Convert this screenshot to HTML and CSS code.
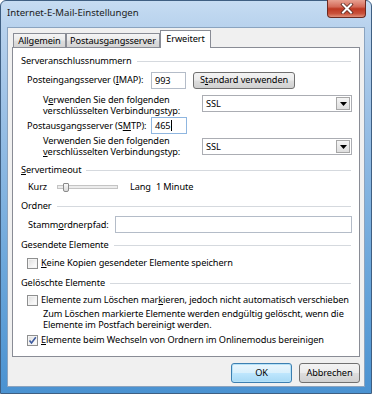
FILE: index.html
```html
<!DOCTYPE html>
<html>
<head>
<meta charset="utf-8">
<link rel="stylesheet" href="styles.css">
</head>
<body>
<div class="window">
  <div class="titlebar">
    <span class="title">Internet-E-Mail-Einstellungen</span>
    <div class="close">
      <svg width="14" height="11" viewBox="0 0 14 11">
        <path d="M3 1.5 L11 9.5 M11 1.5 L3 9.5" stroke="#5a2a22" stroke-width="3.6" stroke-linecap="square" fill="none"/>
        <path d="M3 1.5 L11 9.5 M11 1.5 L3 9.5" stroke="#ffffff" stroke-width="2" stroke-linecap="square" fill="none"/>
      </svg>
    </div>
  </div>
  <div class="client">
    <div class="tabs">
      <div class="tab t1">Allgemein</div>
      <div class="tab t2">Postausgangsserver</div>
      <div class="tab t3 active">Erweitert</div>
    </div>
    <div class="panel">
      <div class="group">Serveranschlussnummern</div>
      <div class="row imap">
        <span class="lbl port-lbl">Posteingangsserver (<u>I</u>MAP):</span>
        <div class="input port">993</div>
        <div class="btn std">S<u>t</u>andard verwenden</div>
      </div>
      <div class="row enc enc1">
        <div class="enc-text">V<u>e</u>rwenden Sie den folgenden<br>verschlüsselten Verbindungstyp:</div>
        <div class="select"><span class="sel-val">SSL</span><span class="arrow"><svg width="7" height="4" viewBox="0 0 7 4"><path d="M0 0 H7 L3.5 4 Z" fill="#000"/></svg></span></div>
      </div>
      <div class="row smtp">
        <span class="lbl port-lbl">Postausgangsserver (S<u>M</u>TP):</span>
        <div class="input port focus">465<span class="caret"></span></div>
      </div>
      <div class="row enc enc2">
        <div class="enc-text">Verwenden Sie den folgenden<br><u>v</u>erschlüsselten Verbindungstyp:</div>
        <div class="select"><span class="sel-val">SSL</span><span class="arrow"><svg width="7" height="4" viewBox="0 0 7 4"><path d="M0 0 H7 L3.5 4 Z" fill="#000"/></svg></span></div>
      </div>
      <div class="group g-timeout"><span><u>S</u>ervertimeout</span></div>
      <div class="row slider-row">
        <span class="kurz">Kurz</span>
        <div class="slider"><div class="track"></div><div class="thumb"></div></div>
        <span class="lang">Lang</span>
        <span class="minute">1 Minute</span>
      </div>
      <div class="group g-ordner">Ordner</div>
      <div class="row stamm">
        <span class="lbl stamm-lbl">Stamm<u>o</u>rdnerpfad:</span>
        <div class="input wide"></div>
      </div>
      <div class="group g-sent">Gesendete Elemente</div>
      <div class="row check keine">
        <span class="cb"></span>
        <span><u>K</u>eine Kopien gesendeter Elemente speichern</span>
      </div>
      <div class="group g-del">Gelöschte Elemente</div>
      <div class="row check mark">
        <span class="cb"></span>
        <span>Elemente zum Löschen mar<u>k</u>ieren, jedoch nicht automatisch verschieben</span>
      </div>
      <div class="note">Zum Löschen markierte Elemente werden endgültig gelöscht, wenn die<br>Elemente im Postfach bereinigt werden.</div>
      <div class="row check purge">
        <span class="cb checked"><svg width="9" height="9" viewBox="0 0 9 9"><path d="M1.5 4.5 L3.5 7 L7.8 1.2" stroke="#3d5a9e" stroke-width="1.6" fill="none"/></svg></span>
        <span><u>E</u>lemente beim Wechseln von Ordnern im Onlinemodus bereinigen</span>
      </div>
    </div>
    <div class="buttons">
      <div class="btn dlg ok">OK</div>
      <div class="btn dlg">Abbrechen</div>
    </div>
  </div>
</div>
</body>
</html>
```

FILE: styles.css
```css
html, body {
  margin: 0;
  padding: 0;
}
body {
  font-family: "Noto Sans", "Open Sans", sans-serif;
  font-size: 9.2px;
  letter-spacing: -0.1px;
  color: #000;
  line-height: 12px;
}
u {
  text-decoration: underline;
  text-underline-offset: 1px;
}
.window {
  width: 372px;
  height: 394px;
  box-sizing: border-box;
  border: 1px solid #3f5f82;
  border-radius: 6px 6px 0 0;
  padding: 0 6px 6px 6px;
  background: linear-gradient(to bottom, #c6dcf2 0px, #b8d2ed 26px, #9cc1e6 110px, #6ea8db 260px, #4a92d1 394px);
  display: flex;
  flex-direction: column;
}
.titlebar {
  height: 26px;
  display: flex;
  align-items: flex-start;
}
.title {
  margin-top: 6px;
  color: #1b1b1b;
  font-size: 9.6px;
  letter-spacing: 0;
}
.close {
  margin: -1px -1px 0 auto;
  width: 39px;
  height: 18px;
  box-sizing: border-box;
  border: 1px solid #6c2a20;
  border-top: none;
  border-radius: 0 0 4px 4px;
  background: linear-gradient(to bottom, #e8a191 0%, #d46a58 40%, #bd3822 52%, #c9523b 80%, #e0907a 100%);
  display: flex;
  align-items: center;
  justify-content: center;
}
.client {
  flex: 1;
  background: #f0f0f0;
  border: 1px solid #8aa3bf;
  display: flex;
  flex-direction: column;
}
.tabs {
  height: 19px;
  display: flex;
  align-items: flex-end;
  padding-left: 5px;
}
.tab {
  box-sizing: border-box;
  height: 14px;
  border: 1px solid #898c95;
  border-bottom: none;
  padding-top: 1px;
  text-align: center;
  background: linear-gradient(to bottom, #f4f4f4 0%, #ebebeb 45%, #dddddd 55%, #d3d3d3 100%);
}
.t1 { width: 53px; }
.t2 { width: 94px; }
.t3 { width: 51px; }
.tab.active {
  height: 18px;
  margin-bottom: -1px;
  padding-top: 2px;
  background: #ffffff;
  position: relative;
  z-index: 1;
}
.panel {
  margin: 0 4px 0 4px;
  height: 310px;
  box-sizing: border-box;
  border: 1px solid #898c95;
  background: #ffffff;
  padding: 7px 7px 0 8px;
  display: flex;
  flex-direction: column;
}
.group {
  display: flex;
  align-items: center;
  height: 12px;
  white-space: nowrap;
}
.group::after {
  content: "";
  flex: 1;
  height: 1px;
  background: #d5d9de;
  margin: 1px 1px 0 5px;
}
.row {
  display: flex;
  align-items: center;
  white-space: nowrap;
}
.imap { height: 18px; margin-top: 4px; }
.port-lbl { margin-left: 6px; width: 124px; flex-shrink: 0; }
.input {
  box-sizing: border-box;
  height: 17px;
  background: #fff;
  border: 1px solid #b4bcc8;
  padding-left: 3px;
  line-height: 15px;
  display: flex;
  align-items: center;
}
.port { width: 35px; }
.smtp .port { width: 36px; }
.input.focus { border-color: #8fb6e0; }
.caret {
  display: inline-block;
  width: 1px;
  height: 11px;
  background: #000;
  margin-left: 1px;
}
.btn {
  box-sizing: border-box;
  height: 17px;
  border: 1px solid #707070;
  border-radius: 3px;
  background: linear-gradient(to bottom, #f3f3f3 0%, #ebebeb 48%, #dddddd 52%, #d0d0d0 100%);
  display: flex;
  align-items: center;
  justify-content: center;
}
.std { width: 102px; margin-left: 7px; }
.enc {
  align-items: flex-start;
  height: 22px;
}
.enc1 { margin-top: 5px; }
.enc2 { margin-top: 1px; }
.enc-text {
  margin-left: 22px;
  line-height: 11px;
}
.select {
  margin-left: auto;
  width: 150px;
  height: 17px;
  box-sizing: border-box;
  border: 1px solid #abadb3;
  background: #fff;
  display: flex;
  align-items: center;
  padding: 1px;
}
.enc1 .select { margin-top: 1px; }
.enc2 .select { margin-top: 3px; }
.sel-val { flex: 1; padding-left: 2px; }
.arrow {
  width: 14px;
  height: 13px;
  box-sizing: border-box;
  border: 1px solid #a7a7a7;
  background: linear-gradient(to bottom, #f5f5f5, #dedede);
  display: flex;
  align-items: center;
  justify-content: center;
}
.smtp { height: 17px; margin-top: 1px; }
.g-timeout { margin-top: 7px; }
.slider-row { height: 12px; margin-top: 5px; }
.kurz { margin-left: 7px; width: 29px; }
.slider {
  width: 61px;
  height: 12px;
  display: flex;
  align-items: center;
  position: relative;
}
.track {
  flex: 1;
  height: 2px;
  border: 1px solid #c4c4c4;
  background: #ececec;
}
.thumb {
  position: absolute;
  left: 6px;
  top: 2px;
  width: 4px;
  height: 7px;
  border: 1px solid #8b8b8b;
  border-radius: 1px 1px 2px 2px;
  background: linear-gradient(to bottom, #fafafa, #dadada);
}
.lang { margin-left: 12px; margin-right: 5px; }
.g-ordner { margin-top: 7px; }
.stamm { height: 17px; margin-top: 4px; }
.stamm-lbl { margin-left: 7px; width: 87px; flex-shrink: 0; }
.wide { flex: 1; }
.g-sent { margin-top: 6px; }
.check { height: 12px; }
.keine { margin-top: 6px; }
.cb {
  flex-shrink: 0;
  margin-left: 6px;
  margin-right: 3px;
  width: 11px;
  height: 11px;
  box-sizing: border-box;
  border: 1px solid #8e8f8f;
  background: linear-gradient(135deg, #dcdcdc 0%, #f4f4f4 60%, #ffffff 100%);
  box-shadow: inset 0 0 0 1px #f4f4f4;
  display: flex;
  align-items: center;
  justify-content: center;
}
.g-del { margin-top: 8px; }
.mark { margin-top: 5px; }
.note {
  margin: 2px 0 0 22px;
  line-height: 11px;
  white-space: nowrap;
}
.purge { margin-top: 4px; }
.buttons {
  display: flex;
  justify-content: flex-end;
  gap: 7px;
  margin: 6px 4px 0 0;
}
.dlg {
  width: 61px;
  height: 20px;
}
.ok {
  border-color: #3c7fb1;
  background: linear-gradient(to bottom, #eaf6fd 0%, #d9f0fc 48%, #bee6fd 52%, #a7d9f5 100%);
  box-shadow: inset 0 0 0 1px #b6e2f8;
}
```
